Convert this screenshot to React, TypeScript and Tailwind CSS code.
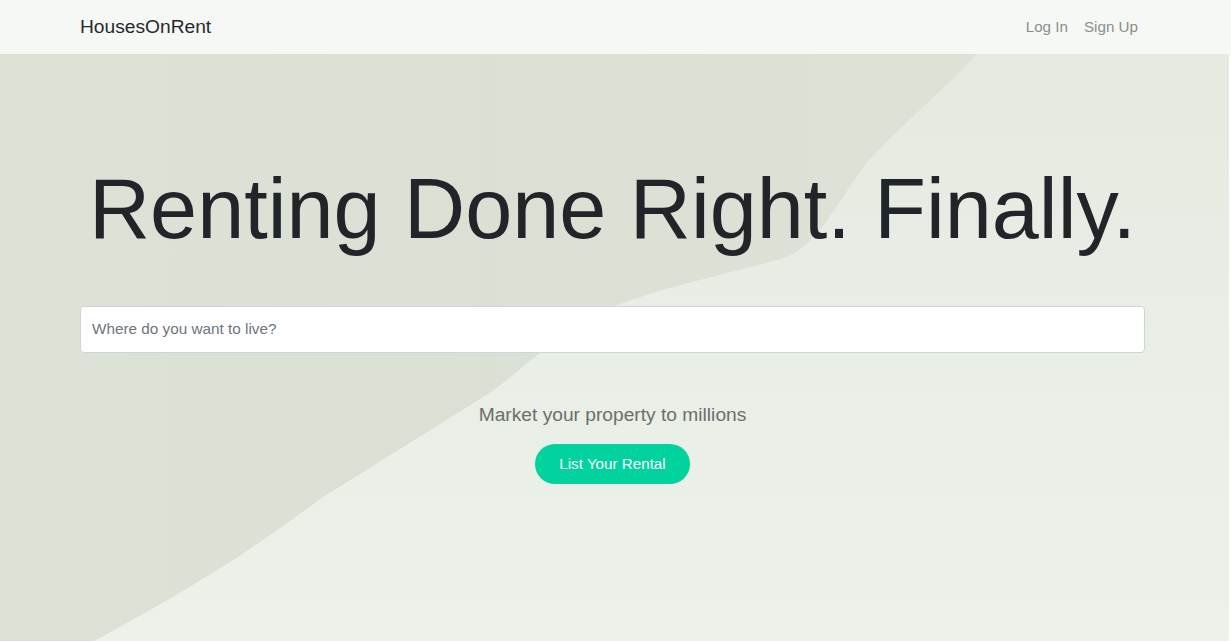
import React from "react";

export default function App() {
  return (
    <div className="w-[1231px] h-[643px] bg-white overflow-hidden font-['Liberation_Sans',Arial,sans-serif] text-[#212529]">
      <nav className="h-[54px] w-full bg-[#f6f8f6] flex items-center justify-between pl-[80px] pr-[93px]">
        <a className="text-[19.2px] leading-none text-[#262a2d]">HousesOnRent</a>
        <div className="flex items-center gap-4 text-[15.2px] text-[#8b8e8c]">
          <a>Log In</a>
          <a>Sign Up</a>
        </div>
      </nav>
      <main className="relative h-[587px] w-[1229px] overflow-hidden bg-[#e8ede5]">
        <svg
          className="absolute inset-0"
          width="1229"
          height="587"
          viewBox="0 0 1229 587"
          preserveAspectRatio="none"
        >
          <defs>
            <linearGradient id="light" x1="0" y1="0" x2="0" y2="1">
              <stop offset="0" stopColor="#e5eae1" />
              <stop offset="1" stopColor="#ecf1ea" />
            </linearGradient>
            <linearGradient id="dark" x1="0" y1="0" x2="1" y2="0">
              <stop offset="0" stopColor="#dde2d7" />
              <stop offset="0.5" stopColor="#dbe0d4" />
              <stop offset="1" stopColor="#dde2d6" />
            </linearGradient>
          </defs>
          <rect x="0" y="0" width="1229" height="587" fill="url(#light)" />
          <path
            d="M977 0 C 935 45, 885 85, 862 115 C 830 160, 815 195, 780 205 C 720 222, 650 235, 590 262 C 550 285, 520 320, 480 345 L 320 445 C 260 490, 200 530, 94 587 L 0 587 L 0 0 Z"
            fill="url(#dark)"
          />
        </svg>
        <div className="relative flex flex-col items-center pt-[104px] pl-[80px] pr-[84px]">
          <h1 className="text-[84.6px] leading-[1.2] font-normal text-[#212529] whitespace-nowrap">
            Renting Done Right. Finally.
          </h1>
          <div className="mt-[46px] w-full h-[47px] bg-white border border-[#ced4da] rounded-[4px] flex items-center px-[11px]">
            <input
              className="w-full bg-transparent outline-none text-[15.3px] text-[#495057] placeholder:text-[#6c757d]"
              placeholder="Where do you want to live?"
            />
          </div>
          <p className="mt-[48px] text-[19.2px] leading-[1.5] text-[#6c6e6c]">
            Market your property to millions
          </p>
          <button className="mt-[15px] h-[40px] w-[155px] rounded-full bg-[#02d39e] text-white text-[15.2px] flex items-center justify-center">
            List Your Rental
          </button>
        </div>
      </main>
    </div>
  );
}
